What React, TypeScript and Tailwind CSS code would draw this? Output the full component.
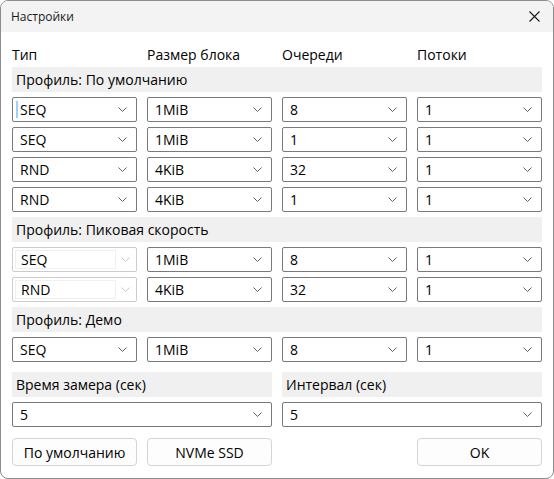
import React from "react";

type Row = [string, string, string, string];

const FONT = "font-['Segoe_UI','Open_Sans','Noto_Sans',sans-serif]";

const Chevron: React.FC<{ faded?: boolean }> = ({ faded }) => (
  <svg width="9" height="5" viewBox="0 0 9 5" className="shrink-0">
    <path d="M0.5 0.5 L4.5 4.5 L8.5 0.5" fill="none" stroke={faded ? "#c8c8c8" : "#606060"} strokeWidth="1" />
  </svg>
);

const Combo: React.FC<{ value: string; disabled?: boolean; caret?: boolean; className?: string }> = ({
  value,
  disabled,
  caret,
  className = "",
}) =>
  disabled ? (
    <div className={`h-[25px] border border-[#cccccc] rounded-[2px] bg-white p-[2px] flex ${className}`}>
      <div className="flex-1 border border-[#f0f0f0] flex items-center pl-[5px] text-[14px] text-black">{value}</div>
      <div className="w-[18px] flex items-center justify-center">
        <Chevron faded />
      </div>
    </div>
  ) : (
    <div
      className={`relative h-[25px] border border-[#7a7a7a] rounded-[2px] bg-white flex items-center pl-[7px] pr-[9px] text-[14px] text-black ${className}`}
    >
      {caret && <span className="absolute left-[3px] top-[3px] bottom-[3px] w-[2px] bg-[#99d1ff]" />}
      <span className="flex-1">{value}</span>
      <Chevron />
    </div>
  );

const SectionBar: React.FC<{ label: string; className?: string }> = ({ label, className = "" }) => (
  <div className={`h-[25px] bg-[#f0f0f0] flex items-center pl-[4px] text-[14px] text-black ${className}`}>{label}</div>
);

const ComboRows: React.FC<{ rows: Row[]; disabledFirst?: boolean; caretFirst?: boolean }> = ({
  rows,
  disabledFirst,
  caretFirst,
}) => (
  <div className="flex flex-col gap-[5px] mt-[5px]">
    {rows.map((r, i) => (
      <div key={i} className="grid grid-cols-4 gap-x-[10px]">
        <Combo value={r[0]} disabled={disabledFirst} caret={caretFirst && i === 0} />
        <Combo value={r[1]} />
        <Combo value={r[2]} />
        <Combo value={r[3]} />
      </div>
    ))}
  </div>
);

const Btn: React.FC<{ label: string }> = ({ label }) => (
  <button
    type="button"
    className="h-[28px] border border-[#d5d5d5] rounded-[4px] bg-[#fdfdfd] text-[14px] text-black flex items-center justify-center"
  >
    {label}
  </button>
);

export default function App() {
  return (
    <div className={`w-[554px] h-[479px] bg-white ${FONT}`}>
      <div className="w-full h-full border border-[#8c8c8c] rounded-[8px] overflow-hidden flex flex-col bg-white">
        <div className="h-[31px] bg-[#f3f3f3] flex items-center justify-between pl-[10px] pr-[13px] shrink-0">
          <span className="text-[12px] text-[#1a1a1a]">Настройки</span>
          <svg width="11" height="11" viewBox="0 0 11 11">
            <path d="M0.5 0.5 L10.5 10.5 M10.5 0.5 L0.5 10.5" stroke="#1a1a1a" strokeWidth="1.1" />
          </svg>
        </div>

        <div className="px-[11px] flex flex-col">
          <div className="grid grid-cols-4 gap-x-[10px] h-[34px] items-end pb-[1px] text-[14px] text-black">
            <span>Тип</span>
            <span>Размер блока</span>
            <span>Очереди</span>
            <span>Потоки</span>
          </div>

          <SectionBar label="Профиль: По умолчанию" className="mt-[1px]" />
          <ComboRows
            caretFirst
            rows={[
              ["SEQ", "1MiB", "8", "1"],
              ["SEQ", "1MiB", "1", "1"],
              ["RND", "4KiB", "32", "1"],
              ["RND", "4KiB", "1", "1"],
            ]}
          />

          <SectionBar label="Профиль: Пиковая скорость" className="mt-[5px]" />
          <ComboRows
            disabledFirst
            rows={[
              ["SEQ", "1MiB", "8", "1"],
              ["RND", "4KiB", "32", "1"],
            ]}
          />

          <SectionBar label="Профиль: Демо" className="mt-[5px]" />
          <ComboRows rows={[["SEQ", "1MiB", "8", "1"]]} />

          <div className="grid grid-cols-2 gap-x-[10px] mt-[10px]">
            <SectionBar label="Время замера (сек)" />
            <SectionBar label="Интервал (сек)" />
          </div>
          <div className="grid grid-cols-2 gap-x-[10px] mt-[5px]">
            <Combo value="5" />
            <Combo value="5" />
          </div>

          <div className="grid grid-cols-4 gap-x-[10px] mt-[11px]">
            <Btn label="По умолчанию" />
            <Btn label="NVMe SSD" />
            <div />
            <Btn label="OK" />
          </div>
        </div>
      </div>
    </div>
  );
}
